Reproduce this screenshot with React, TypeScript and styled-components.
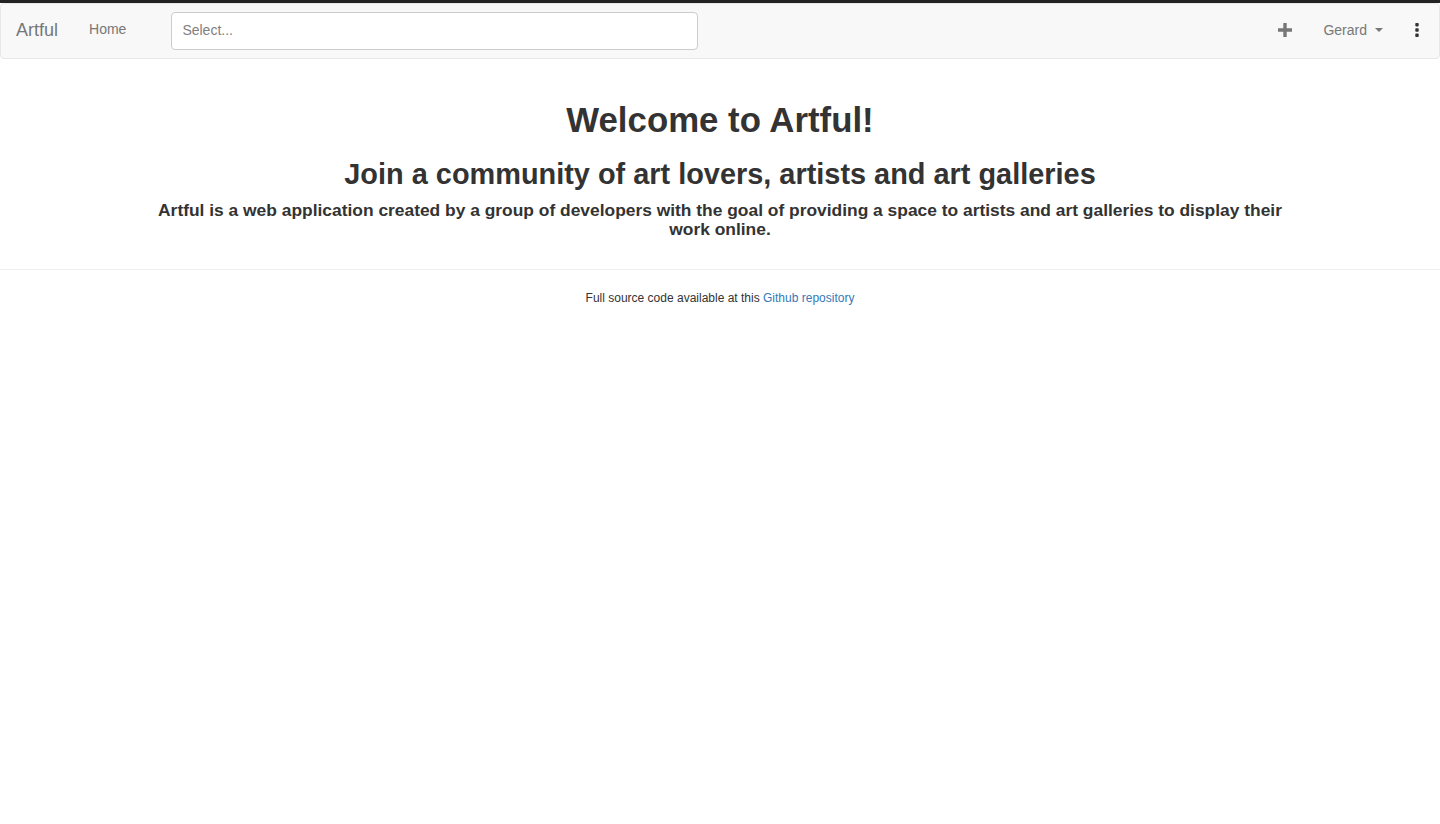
import React from "react";
import styled, { createGlobalStyle } from "styled-components";

const Global = createGlobalStyle`
  html, body { margin: 0; padding: 0; background: #fff; }
  body {
    font-family: "Liberation Sans", Arial, Helvetica, sans-serif;
    font-size: 14px;
    line-height: 1.42857;
    color: #333;
  }
  * { box-sizing: border-box; }
`;

const TopStrip = styled.div`
  height: 3px;
  background: #222;
`;

const Navbar = styled.nav`
  height: 56px;
  background: #f8f8f8;
  border: 1px solid #e7e7e7;
  border-radius: 4px;
  display: flex;
  align-items: center;
  padding: 0 0 0 15px;
`;

const Brand = styled.a`
  font-size: 18px;
  color: #777;
  text-decoration: none;
  margin-right: 31px;
  margin-top: -1px;
`;

const NavLink = styled.a`
  font-size: 14px;
  color: #777;
  text-decoration: none;
  margin-right: 45px;
  margin-top: -2px;
`;

const SelectBox = styled.div`
  width: 527px;
  height: 38px;
  background: #fff;
  border: 1px solid #ccc;
  border-radius: 4px;
  display: flex;
  align-items: center;
  padding-left: 10px;
  color: #808080;
  font-size: 14px;
`;

const Spacer = styled.div`
  flex: 1;
`;

const IconButton = styled.button`
  background: none;
  border: none;
  padding: 0;
  color: #777;
  display: flex;
  align-items: center;
  cursor: pointer;
  font-family: inherit;
  font-size: 14px;
  margin-top: -2px;
`;

const UserMenu = styled(IconButton)`
  margin-left: 31px;
  gap: 6px;
`;

const Caret = styled.span`
  display: inline-block;
  width: 0;
  height: 0;
  border-top: 4px solid #777;
  border-left: 4px solid transparent;
  border-right: 4px solid transparent;
  margin-left: 2px;
`;

const Dots = styled(IconButton)`
  margin-left: 32px;
  margin-right: 20px;
`;

const Hero = styled.section`
  width: 1170px;
  margin: 0 auto;
  padding: 0 15px;
  text-align: center;
  padding-top: 42px;
`;

const H1 = styled.h1`
  font-size: 34.8px;
  font-weight: 700;
  line-height: 1.1;
  margin: 0;
`;

const H2 = styled.h2`
  font-size: 28.9px;
  font-weight: 700;
  line-height: 1.1;
  margin: 20px 0 0;
`;

const H4 = styled.h4`
  font-size: 17.4px;
  font-weight: 700;
  line-height: 1.1;
  margin: 10px 0 0;
`;

const Rule = styled.hr`
  border: 0;
  border-top: 1px solid #eee;
  margin: 30px 0 0;
`;

const Footer = styled.footer`
  text-align: center;
  font-size: 12px;
  color: #333;
  padding-top: 20px;
`;

const Link = styled.a`
  color: #337ab7;
  text-decoration: none;
`;

export default function App() {
  return (
    <>
      <Global />
      <TopStrip />
      <Navbar>
        <Brand href="#">Artful</Brand>
        <NavLink href="#">Home</NavLink>
        <SelectBox>Select...</SelectBox>
        <Spacer />
        <IconButton aria-label="add">
          <svg width="14" height="14" viewBox="0 0 14 14">
            <path d="M5.3 0h3.4v5.3H14v3.4H8.7V14H5.3V8.7H0V5.3h5.3z" fill="#777" />
          </svg>
        </IconButton>
        <UserMenu>
          Gerard <Caret />
        </UserMenu>
        <Dots aria-label="more">
          <svg width="4" height="14" viewBox="0 0 4 14">
            <rect x="0.3" y="0" width="3.4" height="3.4" rx="0.8" fill="#333" />
            <rect x="0.3" y="5.3" width="3.4" height="3.4" rx="0.8" fill="#333" />
            <rect x="0.3" y="10.6" width="3.4" height="3.4" rx="0.8" fill="#333" />
          </svg>
        </Dots>
      </Navbar>
      <Hero>
        <H1>Welcome to Artful!</H1>
        <H2>Join a community of art lovers, artists and art galleries</H2>
        <H4>
          Artful is a web application created by a group of developers with the goal of providing a
          space to artists and art galleries to display their work online.
        </H4>
      </Hero>
      <Rule />
      <Footer>
        Full source code available at this <Link href="#">Github repository</Link>
      </Footer>
    </>
  );
}
